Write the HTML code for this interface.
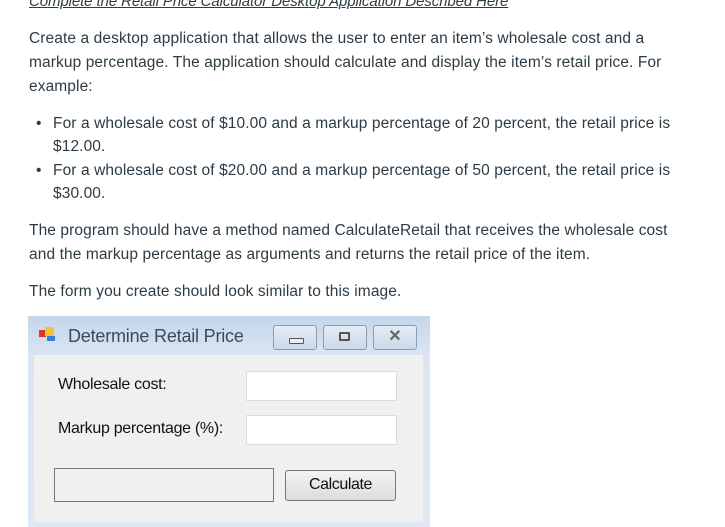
<!DOCTYPE html>
<html><head><meta charset="utf-8"><style>
body{margin:0;width:725px;height:527px;overflow:hidden;background:#fff;font-family:"Liberation Sans",sans-serif;color:#2d3b45;position:relative}
.t{position:absolute;font-size:15.5px;white-space:nowrap;letter-spacing:0.1px}
.win{position:absolute;left:28px;top:316px;width:402px;height:211px;background:linear-gradient(#c5d6ea,#d9e5f3 40px,#dfe8f4)}
.client{position:absolute;left:6px;top:39px;width:389px;height:167px;background:#f0f0f0}
.wb{position:absolute;top:9px;width:44px;height:25px;border:1px solid #8b9bb0;border-radius:3px;background:linear-gradient(#e4ecf6,#cbd8e8);box-sizing:border-box}
.tb{position:absolute;background:#fff;border:1px solid #dcdcdc;box-sizing:border-box}
.lbl{position:absolute;font-size:16px;color:#111;letter-spacing:-0.3px}
</style></head><body>
<div class="t" style="left:29px;top:-7px;font-style:italic;text-decoration:underline;font-size:15px;letter-spacing:-0.1px">Complete the Retail Price Calculator Desktop Application Described Here</div>
<div class="t" style="left:29px;top:30px">Create a desktop application that allows the user to enter an item’s wholesale cost and a</div>
<div class="t" style="left:29px;top:54px">markup percentage. The application should calculate and display the item’s retail price. For</div>
<div class="t" style="left:29px;top:78px">example:</div>
<div class="t" style="left:36px;top:115px">•</div>
<div class="t" style="left:53px;top:115px">For a wholesale cost of $10.00 and a markup percentage of 20 percent, the retail price is</div>
<div class="t" style="left:53px;top:138px">$12.00.</div>
<div class="t" style="left:36px;top:162px">•</div>
<div class="t" style="left:53px;top:162px">For a wholesale cost of $20.00 and a markup percentage of 50 percent, the retail price is</div>
<div class="t" style="left:53px;top:185px">$30.00.</div>
<div class="t" style="left:29px;top:222px">The program should have a method named CalculateRetail that receives the wholesale cost</div>
<div class="t" style="left:29px;top:246px">and the markup percentage as arguments and returns the retail price of the item.</div>
<div class="t" style="left:29px;top:283px">The form you create should look similar to this image.</div>
<div class="win">
 <div style="position:absolute;left:11px;top:14px;width:7px;height:7px;background:#d33"></div>
 <div style="position:absolute;left:17px;top:11px;width:9px;height:9px;background:#f3c531"></div>
 <div style="position:absolute;left:19px;top:20px;width:8px;height:5px;background:#3a7bd5"></div>
 <div style="position:absolute;left:40px;top:10px;font-size:18px;color:#3b4a5e;letter-spacing:-0.2px">Determine Retail Price</div>
 <div class="wb" style="left:245px"><div style="position:absolute;left:15px;top:12px;width:13px;height:4px;border:1px solid #555;border-radius:1px;background:#eee"></div></div>
 <div class="wb" style="left:295px"><div style="position:absolute;left:15px;top:6px;width:11px;height:9px;border:2px solid #555;border-radius:1px;box-sizing:border-box"></div></div>
 <div class="wb" style="left:345px;text-align:center;font-size:16px;line-height:22px;color:#666;font-weight:bold">✕</div>
 <div class="client">
  <div class="lbl" style="left:24px;top:21px">Wholesale cost:</div>
  <div class="lbl" style="left:24px;top:65px">Markup percentage (%):</div>
  <div class="tb" style="left:212px;top:16px;width:151px;height:30px"></div>
  <div class="tb" style="left:212px;top:60px;width:151px;height:30px"></div>
  <div style="position:absolute;left:20px;top:113px;width:220px;height:34px;border:1px solid #777;box-sizing:border-box"></div>
  <div style="position:absolute;left:251px;top:115px;width:111px;height:31px;border:1px solid #777;border-radius:3px;box-sizing:border-box;background:linear-gradient(#f4f4f4,#dcdcdc);text-align:center;line-height:28px;font-size:16px;color:#111;letter-spacing:-0.4px">Calculate</div>
 </div>
</div>
</body></html>
